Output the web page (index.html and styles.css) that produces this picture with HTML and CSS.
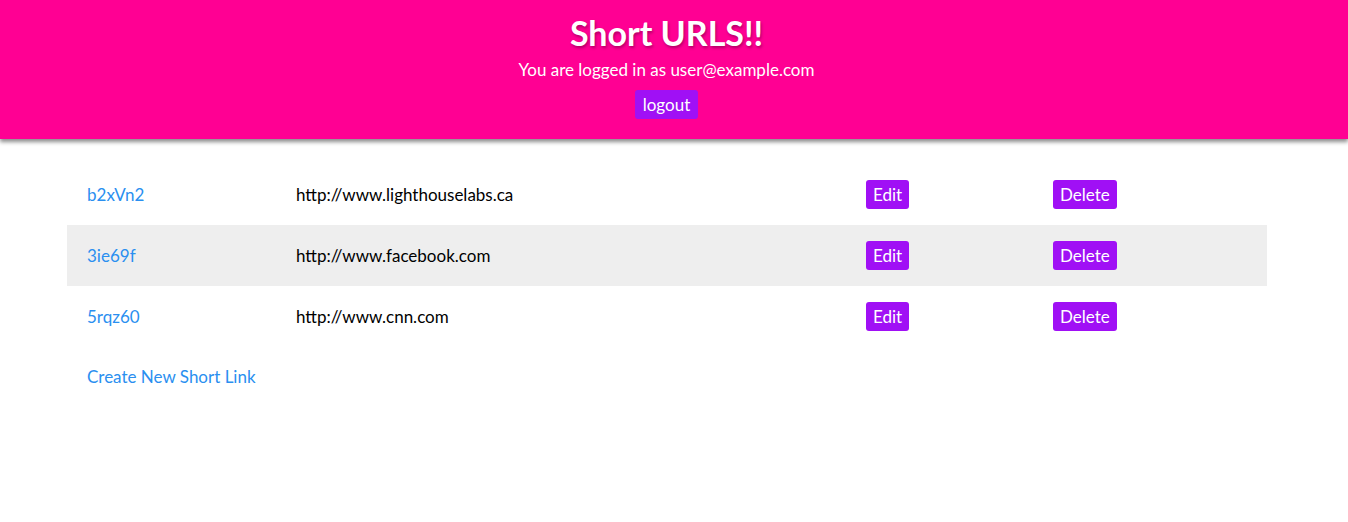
FILE: index.html
```html
<!DOCTYPE html>
<html>
<head>
<meta charset="utf-8">
<link rel="stylesheet" href="styles.css">
</head>
<body>
<header class="site-header">
  <h1 class="title">Short URLS!!</h1>
  <p class="login">You are logged in as user@example.com</p>
  <button class="btn">logout</button>
</header>
<main class="content">
  <div class="urls">
    <div class="row">
      <div class="cell"><a class="link" href="#">b2xVn2</a></div>
      <div class="cell">http://www.lighthouselabs.ca</div>
      <div class="cell"><button class="btn">Edit</button></div>
      <div class="cell"><button class="btn">Delete</button></div>
    </div>
    <div class="row alt">
      <div class="cell"><a class="link" href="#">3ie69f</a></div>
      <div class="cell">http://www.facebook.com</div>
      <div class="cell"><button class="btn">Edit</button></div>
      <div class="cell"><button class="btn">Delete</button></div>
    </div>
    <div class="row">
      <div class="cell"><a class="link" href="#">5rqz60</a></div>
      <div class="cell">http://www.cnn.com</div>
      <div class="cell"><button class="btn">Edit</button></div>
      <div class="cell"><button class="btn">Delete</button></div>
    </div>
  </div>
  <a class="link create" href="#">Create New Short Link</a>
</main>
</body>
</html>
```
FILE: styles.css
```css
html, body {
  margin: 0;
  padding: 0;
  background: #fff;
  font-family: Lato, "Noto Sans", sans-serif;
  font-size: 17px;
  color: #000;
}
.site-header {
  background: #ff0093;
  height: 139px;
  box-sizing: border-box;
  padding: 13px 15px 0 0;
  display: flex;
  flex-direction: column;
  align-items: center;
  color: #fff;
  box-shadow: 0 3px 4px rgba(0,0,0,0.45);
  position: relative;
}
.title {
  margin: 0;
  font-size: 34px;
  line-height: 40px;
  font-weight: 700;
  text-shadow: 1px 2px 3px rgba(0,0,0,0.3);
}
.login {
  margin: 7px 0 0;
  font-size: 17px;
  line-height: 20px;
}
.btn {
  font-family: inherit;
  font-size: 17px;
  line-height: 19px;
  color: #fff;
  background: #a010f5;
  border: none;
  border-radius: 3px;
  padding: 5px 7px;
  cursor: pointer;
}
.site-header .btn {
  margin-top: 10px;
  padding: 5px 8px;
}
.content {
  padding: 25px 67px 0;
}
.urls {
  width: 1200px;
}
.row {
  display: grid;
  grid-template-columns: 209px 570px 187px 234px;
  height: 61px;
  align-items: center;
}
.row.alt {
  background: #eeeeee;
}
.cell {
  padding: 0 20px;
  line-height: 20px;
}
.link {
  color: #2a8ff0;
  text-decoration: none;
}
.create {
  display: inline-block;
  margin: 19px 0 0 20px;
}
```
